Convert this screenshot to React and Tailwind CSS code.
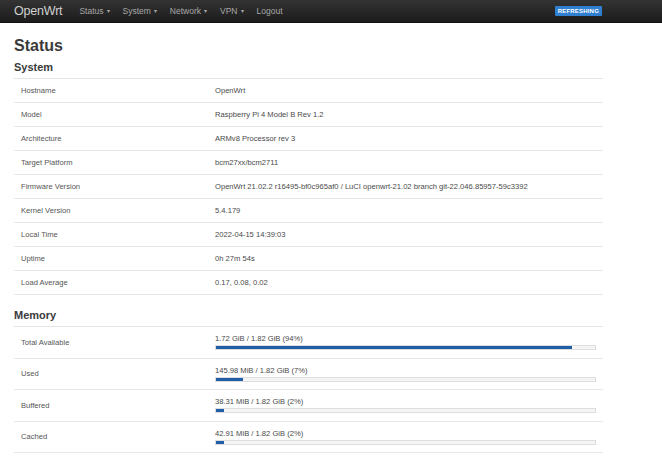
const systemRows = [
  ['Hostname', 'OpenWrt'],
  ['Model', 'Raspberry Pi 4 Model B Rev 1.2'],
  ['Architecture', 'ARMv8 Processor rev 3'],
  ['Target Platform', 'bcm27xx/bcm2711'],
  ['Firmware Version', 'OpenWrt 21.02.2 r16495-bf0c965af0 / LuCI openwrt-21.02 branch git-22.046.85957-59c3392'],
  ['Kernel Version', '5.4.179'],
  ['Local Time', '2022-04-15 14:39:03'],
  ['Uptime', '0h 27m 54s'],
  ['Load Average', '0.17, 0.08, 0.02'],
];

const memoryRows = [
  ['Total Available', '1.72 GiB / 1.82 GiB (94%)', 94],
  ['Used', '145.98 MiB / 1.82 GiB (7%)', 7],
  ['Buffered', '38.31 MiB / 1.82 GiB (2%)', 2],
  ['Cached', '42.91 MiB / 1.82 GiB (2%)', 2],
];

const menu = ['Status', 'System', 'Network', 'VPN'];

export default function App() {
  return (
    <div className="w-[662px] h-[460px] overflow-hidden bg-white font-['Liberation_Sans',Arial,sans-serif] text-[#404040]">
      {/* Navbar */}
      <div className="h-[23px] flex items-center px-[14px] bg-gradient-to-b from-[#333333] to-[#1c1c1c] border-b border-[#111]">
        <span className="text-[12.5px] text-[#d0d0d0] tracking-[-0.2px]">OpenWrt</span>
        <div className="flex items-center ml-[17px] gap-[13px] text-[8.5px] text-[#a8a8a8]">
          {menu.map((m) => (
            <span key={m} className="flex items-center gap-[3px]">
              {m}
              <span className="text-[6px]">▾</span>
            </span>
          ))}
          <span>Logout</span>
        </div>
        <span className="ml-auto mr-[46px] bg-[#2f80d0] text-white text-[6px] font-bold px-[3px] h-[10px] leading-[10px] rounded-[1px] tracking-[0.2px]">
          REFRESHING
        </span>
      </div>

      <div className="px-[14px] w-[617px]">
        <h1 className="text-[16px] font-bold text-[#3a3a3a] mt-[14px] leading-[18px]">Status</h1>
        <h2 className="text-[11px] font-bold text-[#3a3a3a] mt-[4px] leading-[16px]">System</h2>
        <div className="mt-[3px] border-t border-[#e4e4e4]">
          {systemRows.map(([k, v]) => (
            <div key={k} className="flex h-[24px] items-center border-b border-[#e8e8e8] text-[7.6px] text-[#555]">
              <div className="w-[201px] pl-[7px]">{k}</div>
              <div className="whitespace-nowrap text-[#4a4a4a]">{v}</div>
            </div>
          ))}
        </div>

        <h2 className="text-[11px] font-bold text-[#3a3a3a] mt-[12px] leading-[16px]">Memory</h2>
        <div className="mt-[3px] border-t border-[#e4e4e4]">
          {memoryRows.map(([k, v, p]) => (
            <div key={k} className="flex h-[31.5px] items-center border-b border-[#e8e8e8] text-[7.6px] text-[#555]">
              <div className="w-[201px] pl-[7px]">{k}</div>
              <div className="flex flex-col w-[381px]">
                <span className="leading-[10px] text-[#4a4a4a]">{v}</span>
                <div className="h-[5px] border border-[#ddd] bg-[#f5f5f5] mt-[1px]">
                  <div className="h-full bg-[#1f5fa8]" style={{ width: `${p}%` }} />
                </div>
              </div>
            </div>
          ))}
        </div>
      </div>
    </div>
  );
}
